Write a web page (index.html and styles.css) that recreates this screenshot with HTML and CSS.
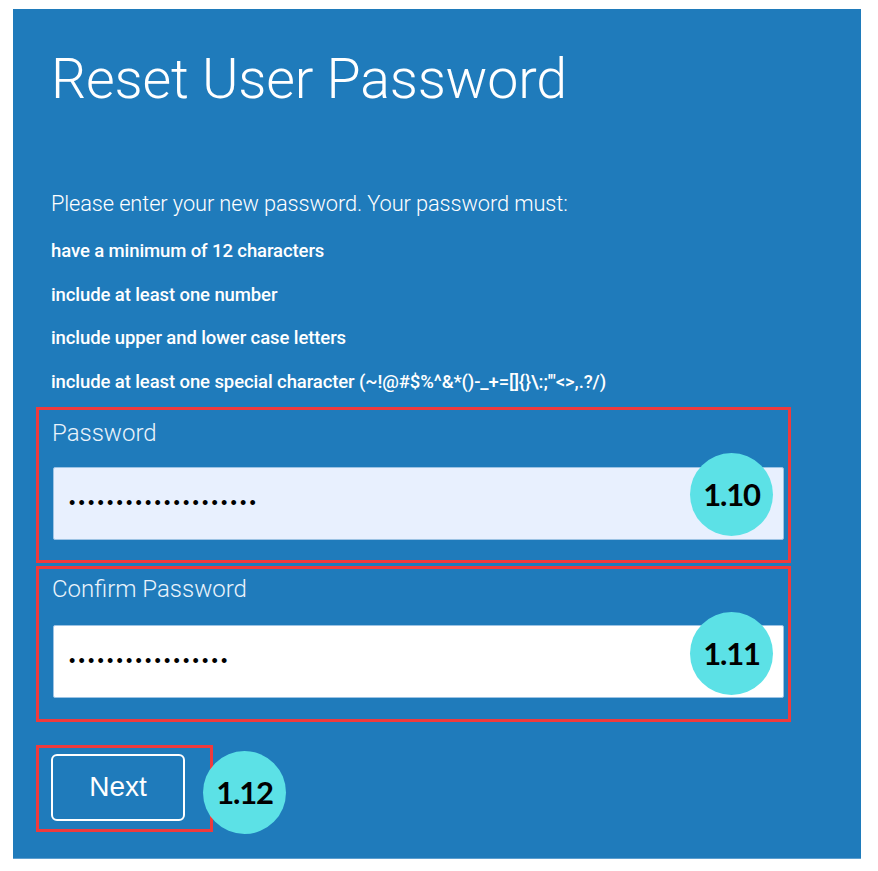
FILE: index.html
```html
<!DOCTYPE html>
<html lang="en">
<head>
<meta charset="utf-8">
<title>Reset User Password</title>
<link rel="stylesheet" href="styles.css">
</head>
<body>
<main class="panel">
  <h1 class="title">Reset User Password</h1>
  <p class="intro">Please enter your new password. Your password must:</p>
  <ul class="rules">
    <li>have a minimum of 12 characters</li>
    <li>include at least one number</li>
    <li>include upper and lower case letters</li>
    <li>include at least one special character (~!@#$%^&amp;*()-_+=[]{}\:;'"&lt;&gt;,.?/)</li>
  </ul>
  <form class="form">
    <div class="mark field">
      <label class="label" for="pw">Password</label>
      <input class="input input-filled" id="pw" type="password" value="abcdefghijklmnopqrst">
      <span class="badge badge-field">1.10</span>
    </div>
    <div class="mark field field-second">
      <label class="label" for="pw2">Confirm Password</label>
      <input class="input" id="pw2" type="password" value="abcdefghijklmnopq">
      <span class="badge badge-field">1.11</span>
    </div>
    <div class="mark action">
      <button class="next" type="button">Next</button>
      <span class="badge badge-action">1.12</span>
    </div>
  </form>
</main>
</body>
</html>
```

FILE: styles.css
```css
html, body {
  margin: 0;
  padding: 0;
  background: #ffffff;
}

body {
  padding: 9px 0 12px 13px;
}

.panel {
  box-sizing: border-box;
  width: 848px;
  height: 850px;
  background: #1f7bbb;
  border-bottom: 1px solid #5d9fd0;
  padding: 38px 0 0 23px;
  color: #ffffff;
  font-family: Roboto, "Liberation Sans", sans-serif;
}

.title {
  margin: 0;
  padding-left: 15px;
  font-size: 55.5px;
  font-weight: 300;
  line-height: 66px;
  letter-spacing: -0.2px;
}

.intro {
  margin: 78px 0 0;
  padding-left: 15px;
  font-size: 21.8px;
  font-weight: 300;
  line-height: 25px;
  letter-spacing: -0.1px;
}

.rules {
  list-style: none;
  margin: 14px 0 0;
  padding: 0 0 0 15px;
}

.rules li {
  font-size: 18.5px;
  font-weight: 500;
  line-height: 43.7px;
  letter-spacing: -0.1px;
}

.form {
  margin-top: 2px;
}

.mark {
  position: relative;
  border: 3px solid #f03a3c;
}

.field {
  box-sizing: content-box;
  display: flex;
  flex-direction: column;
  padding: 9px 4px 20px 14px;
  width: 731px;
}

.field .label {
  margin-bottom: 20px;
}

.field-second {
  margin-top: 3px;
  padding-top: 6px;
  padding-bottom: 21px;
}

.field-second .label {
  margin-bottom: 22px;
}

.label {
  font-size: 24px;
  font-weight: 300;
  line-height: 28px;
  color: #eaf3fb;
  margin-left: -1px;
}

.input {
  box-sizing: border-box;
  width: 731px;
  height: 73px;
  margin: 0;
  padding: 0 15px;
  border: 1px solid #9cc3e4;
  border-radius: 2px;
  background: #ffffff;
  color: #000000;
  font-family: "Liberation Sans", Arial, sans-serif;
  font-size: 18px;
  letter-spacing: 3.2px;
  outline: none;
}

.input-filled {
  background: #e8f0fe;
}

.action {
  display: inline-flex;
  margin-top: 23px;
  padding: 6px 25px 8px 12px;
}

.next {
  box-sizing: border-box;
  width: 134px;
  height: 67px;
  margin: 0;
  padding: 0;
  background: transparent;
  border: 2px solid #ffffff;
  border-radius: 6px;
  color: #ffffff;
  font-family: "Liberation Sans", Arial, sans-serif;
  font-size: 28px;
  line-height: 1;
}

.badge {
  position: absolute;
  width: 83px;
  height: 83px;
  border-radius: 50%;
  background: #5ce1e6;
  color: #000000;
  display: flex;
  align-items: center;
  justify-content: center;
  font-family: Lato, "Open Sans", sans-serif;
  font-weight: 700;
  font-size: 31px;
  letter-spacing: -1.2px;
}

.badge-field {
  left: 651px;
  top: 43px;
}

.badge-action {
  left: 164px;
  top: 3px;
}
```
